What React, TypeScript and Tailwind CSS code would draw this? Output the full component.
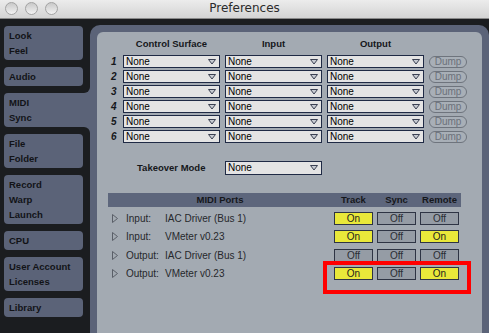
import React from "react";

const SANS = { fontFamily: '"Liberation Sans", Arial, sans-serif' };

function Arrow() {
  return (
    <svg className="absolute right-[3px] top-1/2 -translate-y-1/2" width="8" height="6" viewBox="0 0 8 6">
      <path d="M0.5 0.5 H7.5 L4 5 Z" fill="#c7cbd2" stroke="#3a4052" strokeWidth="1" strokeLinejoin="round" />
    </svg>
  );
}

function Dropdown({ cls }: { cls: string }) {
  return (
    <div className={`relative flex items-center bg-[#e4e4e4] border border-[#1f2a45] pl-[2px] ${cls}`}>
      <span className="text-[10px] leading-none text-black">None</span>
      <Arrow />
    </div>
  );
}

function Tab({ lines, selected }: { lines: string[]; selected?: boolean }) {
  return (
    <div
      className={`relative bg-[#5b6378] py-[2px] pl-[5px] text-[9.5px] leading-[15px] font-bold text-[#121317] ${
        selected ? "w-[86px] rounded-l-[4px]" : "w-[79px] rounded-[4px]"
      }`}
    >
      {lines.map((l) => (
        <div key={l}>{l}</div>
      ))}
      {selected && (
        <>
          <div className="absolute right-0 -top-[7px] w-[7px] h-[7px] bg-[#5b6378]">
            <div className="w-full h-full bg-[#1b1d20] rounded-br-[6px]" />
          </div>
          <div className="absolute right-0 -bottom-[7px] w-[7px] h-[7px] bg-[#5b6378]">
            <div className="w-full h-full bg-[#1b1d20] rounded-tr-[6px]" />
          </div>
        </>
      )}
    </div>
  );
}

function Light() {
  return (
    <div className="w-[13px] h-[13px] rounded-full border border-[#a3a3a3] bg-gradient-to-b from-[#c9c9c9] to-[#f2f2f2]" />
  );
}

function Tri() {
  return (
    <svg width="6" height="9" viewBox="0 0 6 9">
      <path d="M0.5 0.5 L5.5 4.5 L0.5 8.5 Z" fill="none" stroke="#5a5f68" strokeWidth="1" />
    </svg>
  );
}

function Btn({ on }: { on: boolean }) {
  return (
    <div className="w-[43px] flex justify-center">
      <div
        className={`w-[39px] h-[13px] border border-[#2e3444] flex items-center justify-center text-[10px] leading-none ${
          on ? "bg-[#e9e83a] text-[#1e1e1e]" : "bg-[#959ca5] text-[#2a2d33]"
        }`}
      >
        {on ? "On" : "Off"}
      </div>
    </div>
  );
}

const ports = [
  { dir: "Input:", name: "IAC Driver (Bus 1)", v: [true, false, false] },
  { dir: "Input:", name: "VMeter v0.23", v: [true, false, true] },
  { dir: "Output:", name: "IAC Driver (Bus 1)", v: [false, false, false] },
  { dir: "Output:", name: "VMeter v0.23", v: [true, false, true] },
];

export default function App() {
  return (
    <div className="relative w-[489px] h-[333px] overflow-hidden bg-[#1b1d20] flex flex-col" style={SANS}>
      {/* title bar */}
      <div className="relative h-[19px] shrink-0 bg-gradient-to-b from-[#ececec] to-[#d4d4d4] border-b border-[#8a8a8a] flex items-center">
        <div className="flex gap-[7px] pl-[5px] -mt-[2px]">
          <Light />
          <Light />
          <Light />
        </div>
        <div
          className="absolute inset-x-0 top-[1px] text-center text-[12px] leading-[14px] text-[#2b2b2b]"
          style={{ fontFamily: '"DejaVu Sans", sans-serif' }}
        >
          Preferences
        </div>
      </div>

      <div className="flex flex-1 pt-[6px]">
        {/* tabs */}
        <div className="w-[90px] shrink-0 pl-[4px] pt-[1px] flex flex-col gap-[7px]">
          <Tab lines={["Look", "Feel"]} />
          <Tab lines={["Audio"]} />
          <Tab lines={["MIDI", "Sync"]} selected />
          <Tab lines={["File", "Folder"]} />
          <Tab lines={["Record", "Warp", "Launch"]} />
          <Tab lines={["CPU"]} />
          <Tab lines={["User Account", "Licenses"]} />
          <Tab lines={["Library"]} />
        </div>

        {/* main panel */}
        <div className="flex-1 flex bg-[#5b6378] rounded-t-[10px] px-[7px] pt-[7px]">
          <div className="flex-1 bg-[#a3aab2] rounded-t-[6px] pt-[6px]">
            {/* headers */}
            <div className="flex h-[13px] items-center pl-[26px] text-[9.5px] font-bold text-[#15171b]">
              <div className="w-[97px] text-center">Control Surface</div>
              <div className="w-[97px] ml-[5px] text-center">Input</div>
              <div className="w-[97px] ml-[5px] text-center">Output</div>
            </div>
            <div className="flex flex-col gap-[2px] mt-[4px]">
              {[1, 2, 3, 4, 5, 6].map((n) => (
                <div key={n} className="flex h-[13px] items-center">
                  <div className="w-[26px] pl-[14px] text-[10px] font-bold italic text-[#15171b] leading-none">{n}</div>
                  <Dropdown cls="w-[97px] h-[13px]" />
                  <Dropdown cls="w-[97px] h-[13px] ml-[5px]" />
                  <Dropdown cls="w-[97px] h-[13px] ml-[5px]" />
                  <div className="ml-[5px] w-[38px] h-[12px] rounded-full border border-[#6e747d] bg-[#a8afb7] text-[#6b717a] text-[10px] leading-none flex items-center justify-center">
                    Dump
                  </div>
                </div>
              ))}
            </div>

            {/* takeover */}
            <div className="flex h-[14px] items-center mt-[18px] pl-[26px]">
              <div className="w-[97px] pl-[14px] text-[9.5px] font-bold text-[#15171b]">Takeover Mode</div>
              <Dropdown cls="w-[97px] h-[14px] ml-[5px]" />
            </div>

            {/* MIDI ports */}
            <div className="mt-[18px] ml-[11px] w-[353px]">
              <div className="flex h-[14px] items-center bg-[#5d667c] text-[9.5px] font-bold text-[#15171b]">
                <div className="w-[224px] text-center">MIDI Ports</div>
                <div className="w-[43px] text-center">Track</div>
                <div className="w-[43px] text-center">Sync</div>
                <div className="w-[43px] text-center">Remote</div>
              </div>
              <div className="flex flex-col gap-[5px] mt-[5px]">
                {ports.map((p, i) => (
                  <div key={i} className={`flex h-[13px] items-center ${i === 2 ? "mt-[1px]" : ""}`}>
                    <div className="w-[224px] flex items-center text-[10px] text-[#26282c]">
                      <div className="w-[18px] pl-[4px] flex items-center">
                        <Tri />
                      </div>
                      <div className="w-[39px]">{p.dir}</div>
                      <div>{p.name}</div>
                    </div>
                    {p.v.map((on, j) => (
                      <Btn key={j} on={on} />
                    ))}
                  </div>
                ))}
              </div>
            </div>
          </div>
        </div>
      </div>

      {/* red annotation box */}
      <div className="absolute left-[323px] top-[261px] w-[148px] h-[33px] border-[4px] border-[#ff0000]" />
    </div>
  );
}
